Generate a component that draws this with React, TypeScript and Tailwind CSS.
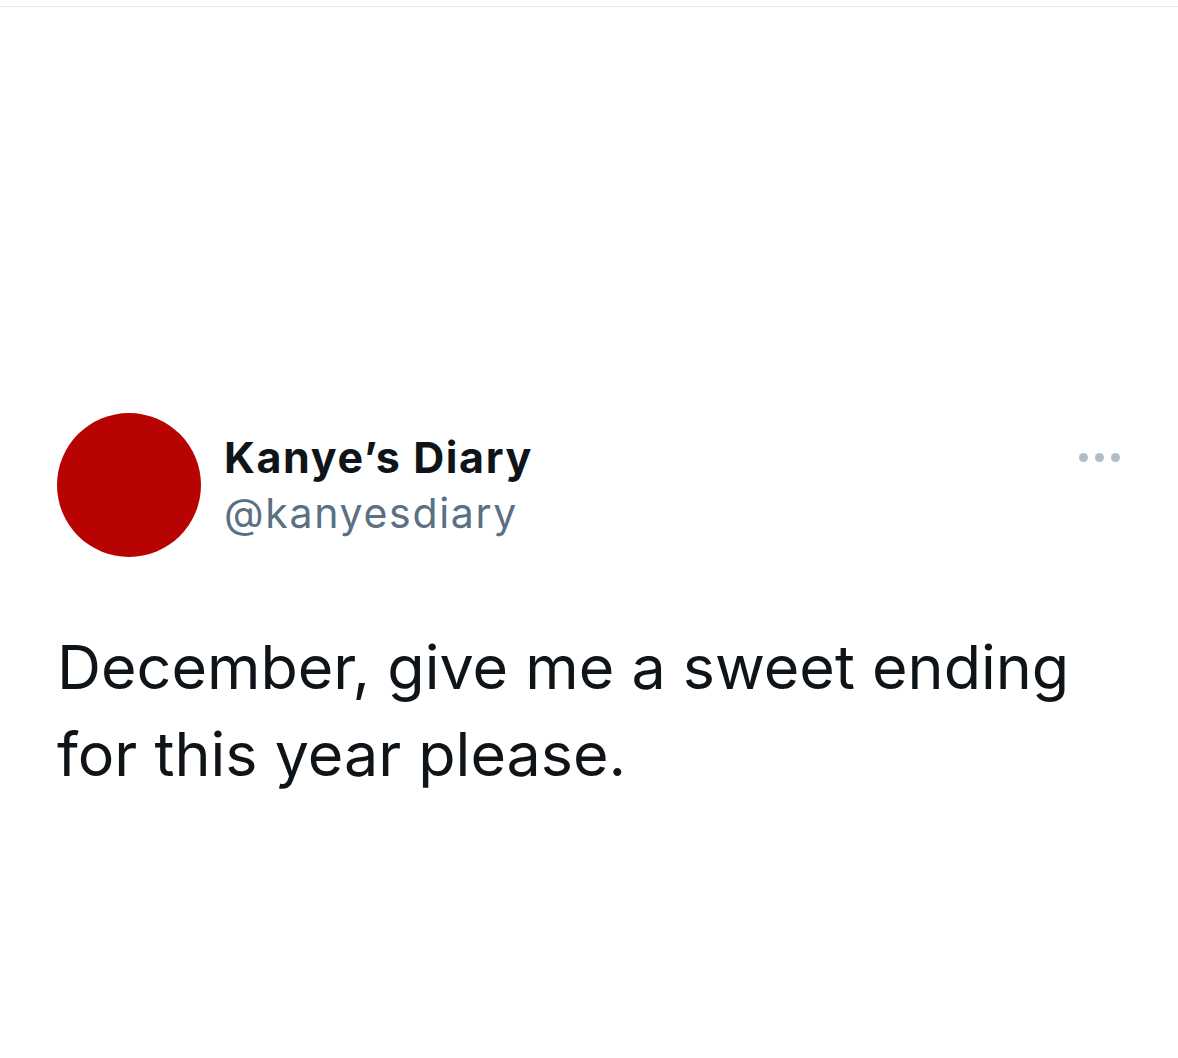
export default function App() {
    return (
        <div className="flex h-[1058px] w-[1178px] flex-col bg-white font-['Inter',sans-serif]">
            {/* hairline at the top edge */}
            <div className="mt-[6px] h-px w-full bg-[#e6e6e6]" />

            <div className="flex flex-col px-[57px] pt-[406px]">
                {/* Header: avatar, names, overflow dots */}
                <div className="flex items-center">
                    <div className="h-[144px] w-[144px] shrink-0 rounded-full bg-[#b80303]" />
                    <div className="ml-[23px] flex flex-col">
                        <span className="text-[43px] font-bold leading-[56px] tracking-[1.6px] text-[#0f1419]">
                            Kanye’s Diary
                        </span>
                        <span className="text-[41px] leading-[56px] tracking-[1.7px] text-[#5b7083]">
                            @kanyesdiary
                        </span>
                    </div>
                    <div className="ml-auto mr-[1px] flex gap-[7px] self-start pt-[40px]">
                        <span className="h-[9px] w-[9px] rounded-full bg-[#b3bdc6]" />
                        <span className="h-[9px] w-[9px] rounded-full bg-[#b3bdc6]" />
                        <span className="h-[9px] w-[9px] rounded-full bg-[#b3bdc6]" />
                    </div>
                </div>

                {/* Tweet body */}
                <p className="mt-[67px] text-[61px] leading-[87px] text-[#0f1419]">
                    December, give me a sweet ending
                    <br />
                    for this year please.
                </p>
            </div>
        </div>
    );
}
